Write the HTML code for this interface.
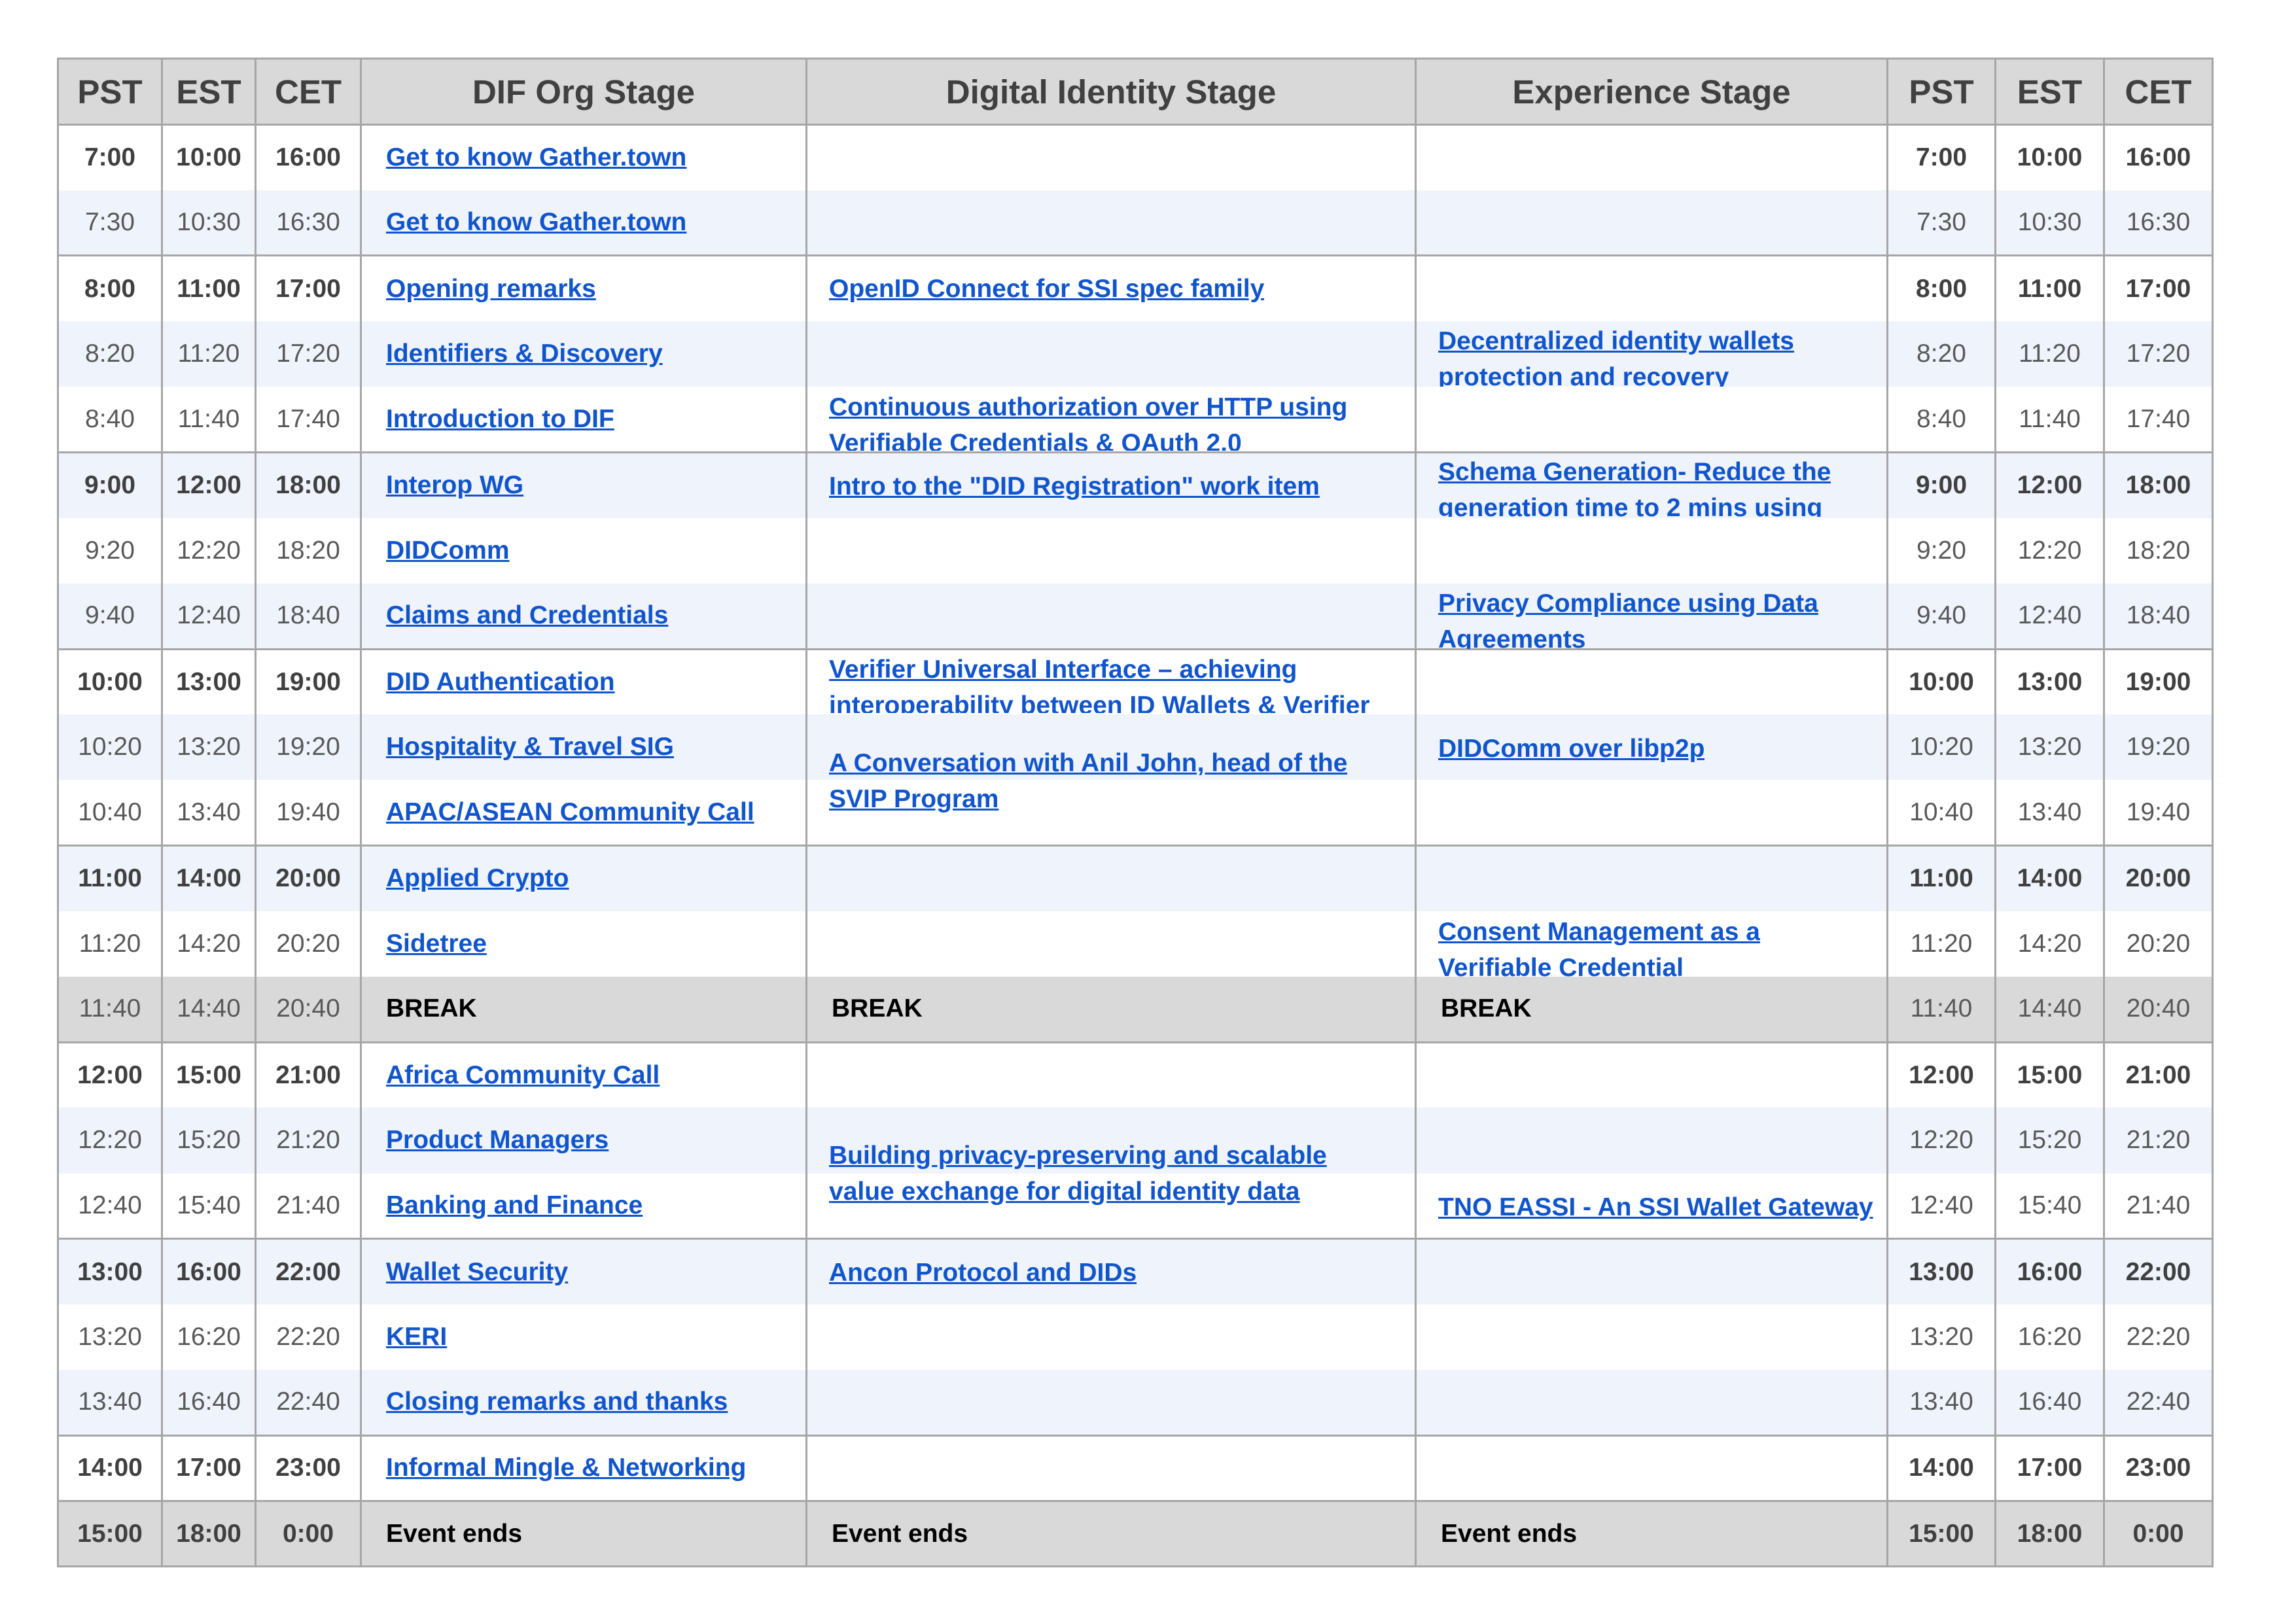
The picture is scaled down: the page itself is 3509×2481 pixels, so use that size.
<!DOCTYPE html>
<html><head><meta charset="utf-8"><style>
html,body{margin:0;padding:0;background:#fff;width:3509px;height:2481px;overflow:hidden;position:relative;font-family:"Liberation Sans",sans-serif}
table{position:absolute;left:87px;top:88px;border-collapse:collapse;table-layout:fixed;width:3293px}
td,th{border-left:3px solid #a6a6a6;border-right:3px solid #a6a6a6;padding:0;height:100.2px;box-sizing:border-box;white-space:nowrap;overflow:hidden}
th{background:#d9d9d9;color:#404040;font-size:51px;font-weight:bold;border:3px solid #a6a6a6;height:101px}
td.t{text-align:center;font-size:39px;color:#595959}
tr.b td.t{font-weight:bold;color:#404040}
td.s{padding-left:37px;font-size:39px;font-weight:bold;color:#000}
td.s .a{font-size:39px}
tr.w td{background:#fff}
tr.l td{background:#eef3fc}
tr.g td{background:#d9d9d9}
tr.top td{border-top:3px solid #a6a6a6}
tr.last td{border-bottom:3px solid #a6a6a6}
.a{color:#1155cc;text-decoration:underline;font-weight:bold}
.o{position:absolute;overflow:hidden;font-size:39px;font-weight:bold;line-height:55px;color:#1155cc;text-decoration:underline;white-space:nowrap}
</style></head><body>
<table>
<colgroup><col style="width:159px"><col style="width:143px"><col style="width:161px"><col style="width:681px"><col style="width:931px"><col style="width:721px"><col style="width:165px"><col style="width:166px"><col style="width:166px"></colgroup>
<tr><th>PST</th><th>EST</th><th>CET</th><th>DIF Org Stage</th><th>Digital Identity Stage</th><th>Experience Stage</th><th>PST</th><th>EST</th><th>CET</th></tr>
<tr class="w b top"><td class="t">7:00</td><td class="t">10:00</td><td class="t">16:00</td><td class="s"><span class="a">Get to know Gather.town</span></td><td></td><td></td><td class="t">7:00</td><td class="t">10:00</td><td class="t">16:00</td></tr>
<tr class="l"><td class="t">7:30</td><td class="t">10:30</td><td class="t">16:30</td><td class="s"><span class="a">Get to know Gather.town</span></td><td></td><td></td><td class="t">7:30</td><td class="t">10:30</td><td class="t">16:30</td></tr>
<tr class="w b top"><td class="t">8:00</td><td class="t">11:00</td><td class="t">17:00</td><td class="s"><span class="a">Opening remarks</span></td><td></td><td></td><td class="t">8:00</td><td class="t">11:00</td><td class="t">17:00</td></tr>
<tr class="l"><td class="t">8:20</td><td class="t">11:20</td><td class="t">17:20</td><td class="s"><span class="a">Identifiers &amp; Discovery</span></td><td></td><td></td><td class="t">8:20</td><td class="t">11:20</td><td class="t">17:20</td></tr>
<tr class="w"><td class="t">8:40</td><td class="t">11:40</td><td class="t">17:40</td><td class="s"><span class="a">Introduction to DIF</span></td><td></td><td></td><td class="t">8:40</td><td class="t">11:40</td><td class="t">17:40</td></tr>
<tr class="l b top"><td class="t">9:00</td><td class="t">12:00</td><td class="t">18:00</td><td class="s"><span class="a">Interop WG</span></td><td></td><td></td><td class="t">9:00</td><td class="t">12:00</td><td class="t">18:00</td></tr>
<tr class="w"><td class="t">9:20</td><td class="t">12:20</td><td class="t">18:20</td><td class="s"><span class="a">DIDComm</span></td><td></td><td></td><td class="t">9:20</td><td class="t">12:20</td><td class="t">18:20</td></tr>
<tr class="l"><td class="t">9:40</td><td class="t">12:40</td><td class="t">18:40</td><td class="s"><span class="a">Claims and Credentials</span></td><td></td><td></td><td class="t">9:40</td><td class="t">12:40</td><td class="t">18:40</td></tr>
<tr class="w b top"><td class="t">10:00</td><td class="t">13:00</td><td class="t">19:00</td><td class="s"><span class="a">DID Authentication</span></td><td></td><td></td><td class="t">10:00</td><td class="t">13:00</td><td class="t">19:00</td></tr>
<tr class="l"><td class="t">10:20</td><td class="t">13:20</td><td class="t">19:20</td><td class="s"><span class="a">Hospitality &amp; Travel SIG</span></td><td></td><td></td><td class="t">10:20</td><td class="t">13:20</td><td class="t">19:20</td></tr>
<tr class="w"><td class="t">10:40</td><td class="t">13:40</td><td class="t">19:40</td><td class="s"><span class="a">APAC/ASEAN Community Call</span></td><td></td><td></td><td class="t">10:40</td><td class="t">13:40</td><td class="t">19:40</td></tr>
<tr class="l b top"><td class="t">11:00</td><td class="t">14:00</td><td class="t">20:00</td><td class="s"><span class="a">Applied Crypto</span></td><td></td><td></td><td class="t">11:00</td><td class="t">14:00</td><td class="t">20:00</td></tr>
<tr class="w"><td class="t">11:20</td><td class="t">14:20</td><td class="t">20:20</td><td class="s"><span class="a">Sidetree</span></td><td></td><td></td><td class="t">11:20</td><td class="t">14:20</td><td class="t">20:20</td></tr>
<tr class="g"><td class="t">11:40</td><td class="t">14:40</td><td class="t">20:40</td><td class="s">BREAK</td><td class="s">BREAK</td><td class="s">BREAK</td><td class="t">11:40</td><td class="t">14:40</td><td class="t">20:40</td></tr>
<tr class="w b top"><td class="t">12:00</td><td class="t">15:00</td><td class="t">21:00</td><td class="s"><span class="a">Africa Community Call</span></td><td></td><td></td><td class="t">12:00</td><td class="t">15:00</td><td class="t">21:00</td></tr>
<tr class="l"><td class="t">12:20</td><td class="t">15:20</td><td class="t">21:20</td><td class="s"><span class="a">Product Managers</span></td><td></td><td></td><td class="t">12:20</td><td class="t">15:20</td><td class="t">21:20</td></tr>
<tr class="w"><td class="t">12:40</td><td class="t">15:40</td><td class="t">21:40</td><td class="s"><span class="a">Banking and Finance</span></td><td></td><td></td><td class="t">12:40</td><td class="t">15:40</td><td class="t">21:40</td></tr>
<tr class="l b top"><td class="t">13:00</td><td class="t">16:00</td><td class="t">22:00</td><td class="s"><span class="a">Wallet Security</span></td><td></td><td></td><td class="t">13:00</td><td class="t">16:00</td><td class="t">22:00</td></tr>
<tr class="w"><td class="t">13:20</td><td class="t">16:20</td><td class="t">22:20</td><td class="s"><span class="a">KERI</span></td><td></td><td></td><td class="t">13:20</td><td class="t">16:20</td><td class="t">22:20</td></tr>
<tr class="l"><td class="t">13:40</td><td class="t">16:40</td><td class="t">22:40</td><td class="s"><span class="a">Closing remarks and thanks</span></td><td></td><td></td><td class="t">13:40</td><td class="t">16:40</td><td class="t">22:40</td></tr>
<tr class="w b top"><td class="t">14:00</td><td class="t">17:00</td><td class="t">23:00</td><td class="s"><span class="a">Informal Mingle &amp; Networking</span></td><td></td><td></td><td class="t">14:00</td><td class="t">17:00</td><td class="t">23:00</td></tr>
<tr class="g b top last"><td class="t">15:00</td><td class="t">18:00</td><td class="t">0:00</td><td class="s">Event ends</td><td class="s">Event ends</td><td class="s">Event ends</td><td class="t">15:00</td><td class="t">18:00</td><td class="t">0:00</td></tr>
</table>

<div class="o" style="left:1267px;top:414px;height:60px">OpenID Connect for SSI spec family</div>
<div class="o" style="left:1267px;top:595px;height:94px">Continuous authorization over HTTP using<br>Verifiable Credentials &amp; OAuth 2.0</div>
<div class="o" style="left:1267px;top:716px;height:60px">Intro to the "DID Registration" work item</div>
<div class="o" style="left:1267px;top:996px;height:94px">Verifier Universal Interface – achieving<br>interoperability between ID Wallets &amp; Verifier</div>
<div class="o" style="left:1267px;top:1139px;height:112px">A Conversation with Anil John, head of the<br>SVIP Program</div>
<div class="o" style="left:1267px;top:1739px;height:112px">Building privacy-preserving and scalable<br>value exchange for digital identity data</div>
<div class="o" style="left:1267px;top:1918px;height:60px">Ancon Protocol and DIDs</div>

<div class="o" style="left:2198px;top:494px;height:97px">Decentralized identity wallets<br>protection and recovery</div>
<div class="o" style="left:2198px;top:694px;height:96px">Schema Generation- Reduce the<br>generation time to 2 mins using</div>
<div class="o" style="left:2198px;top:895px;height:97px">Privacy Compliance using Data<br>Agreements</div>
<div class="o" style="left:2198px;top:1117px;height:60px">DIDComm over libp2p</div>
<div class="o" style="left:2198px;top:1397px;height:96px">Consent Management as a<br>Verifiable Credential</div>
<div class="o" style="left:2198px;top:1818px;height:60px">TNO EASSI - An SSI Wallet Gateway</div>
</body></html>
